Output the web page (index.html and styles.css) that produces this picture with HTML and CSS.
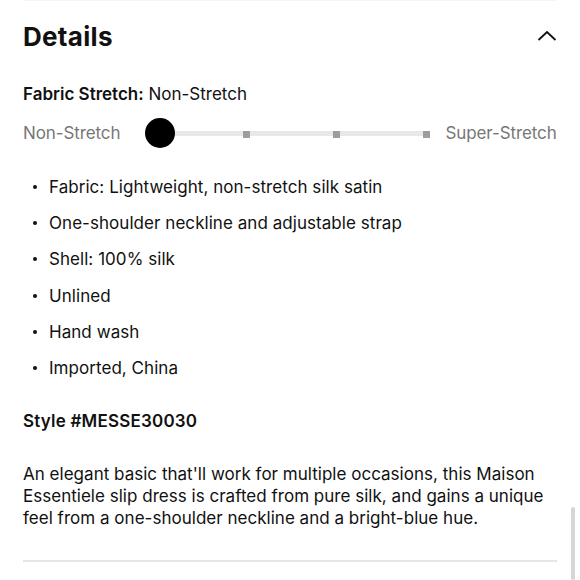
FILE: index.html
```html
<!DOCTYPE html>
<html>
<head>
<meta charset="utf-8">
<link rel="stylesheet" href="styles.css">
</head>
<body>
<div class="page">
  <div class="topline"></div>
  <header class="head">
    <h2 class="title">Details</h2>
    <svg class="chev" width="20" height="12" viewBox="0 0 20 12"><path d="M1.5 10 L10 2 L18.5 10" fill="none" stroke="#111" stroke-width="1.8"/></svg>
  </header>
  <p class="stretch"><b>Fabric Stretch:</b> Non-Stretch</p>
  <div class="slider-row">
    <span class="lbl">Non-Stretch</span>
    <div class="slider">
      <div class="track">
        <span class="col"><i class="tick"></i></span>
        <span class="col"><i class="tick"></i></span>
        <span class="col"><i class="tick"></i></span>
      </div>
      <span class="knob"></span>
    </div>
    <span class="lbl">Super-Stretch</span>
  </div>
  <ul class="list">
    <li>Fabric: Lightweight, non-stretch silk satin</li>
    <li>One-shoulder neckline and adjustable strap</li>
    <li>Shell: 100% silk</li>
    <li>Unlined</li>
    <li>Hand wash</li>
    <li>Imported, China</li>
  </ul>
  <p class="style">Style #MESSE30030</p>
  <p class="desc">An elegant basic that'll work for multiple occasions, this Maison Essentiele slip dress is crafted from pure silk, and gains a unique feel from a one-shoulder neckline and a bright-blue hue.</p>
  <hr class="rule">
</div>
<div class="scrollbar"></div>
</body>
</html>
```
FILE: styles.css
```css
html, body {
  margin: 0;
  padding: 0;
  background: #fff;
}
body {
  font-family: Inter, "Noto Sans", sans-serif;
  color: #111;
  width: 580px;
  height: 580px;
  overflow: hidden;
  position: relative;
}
.page {
  padding: 0 23px;
}
.topline {
  height: 1px;
  background: #f6f6f6;
}
.head {
  display: flex;
  justify-content: space-between;
  align-items: center;
  margin-top: 21px;
  height: 30px;
}
.title {
  margin: 0;
  font-size: 26px;
  line-height: 30px;
  font-weight: 700;
  letter-spacing: 0.3px;
}
.chev {
  margin-top: -2px;
}
.stretch {
  margin: 31px 0 0;
  font-size: 17px;
  line-height: 22px;
}
.stretch b {
  font-weight: 600;
}
.slider-row {
  margin-top: 13px;
  height: 30px;
  display: flex;
  align-items: center;
}
.lbl {
  font-size: 17px;
  color: #777;
  letter-spacing: -0.1px;
}
.slider {
  position: relative;
  width: 283px;
  height: 30px;
  margin: 0 17px 0 25px;
  display: flex;
  align-items: center;
}
.track {
  flex: 1;
  height: 5px;
  margin-left: 15px;
  background: #e8e8e8;
  display: grid;
  grid-template-columns: repeat(3, 90px);
  justify-content: end;
}
.col {
  display: flex;
  justify-content: flex-end;
  align-items: center;
}
.tick {
  width: 7px;
  height: 7px;
  background: #9d9d9d;
}
.knob {
  position: absolute;
  left: 0;
  top: 0;
  width: 30px;
  height: 30px;
  border-radius: 50%;
  background: #000;
}
.list {
  list-style: none;
  margin: 21px 0 0;
  padding: 0;
}
.list li {
  position: relative;
  padding-left: 26px;
  font-size: 17px;
  line-height: 36.2px;
  letter-spacing: 0.05px;
}
.list li::before {
  content: "";
  position: absolute;
  left: 10px;
  top: 16px;
  width: 4px;
  height: 4px;
  border-radius: 50%;
  background: #111;
}
.style {
  margin: 24px 0 0;
  font-size: 17px;
  line-height: 22px;
  font-weight: 600;
  letter-spacing: 0.2px;
}
.desc {
  margin: 31px 0 0;
  font-size: 17px;
  line-height: 22px;
  letter-spacing: 0.02px;
}
.rule {
  margin: 31px 0 0;
  border: 0;
  height: 1.5px;
  background: #e6e6e6;
}
.scrollbar {
  position: absolute;
  right: 5px;
  top: 507px;
  bottom: 0;
  width: 4px;
  border-radius: 2px;
  background: #d6d6d6;
}
```
